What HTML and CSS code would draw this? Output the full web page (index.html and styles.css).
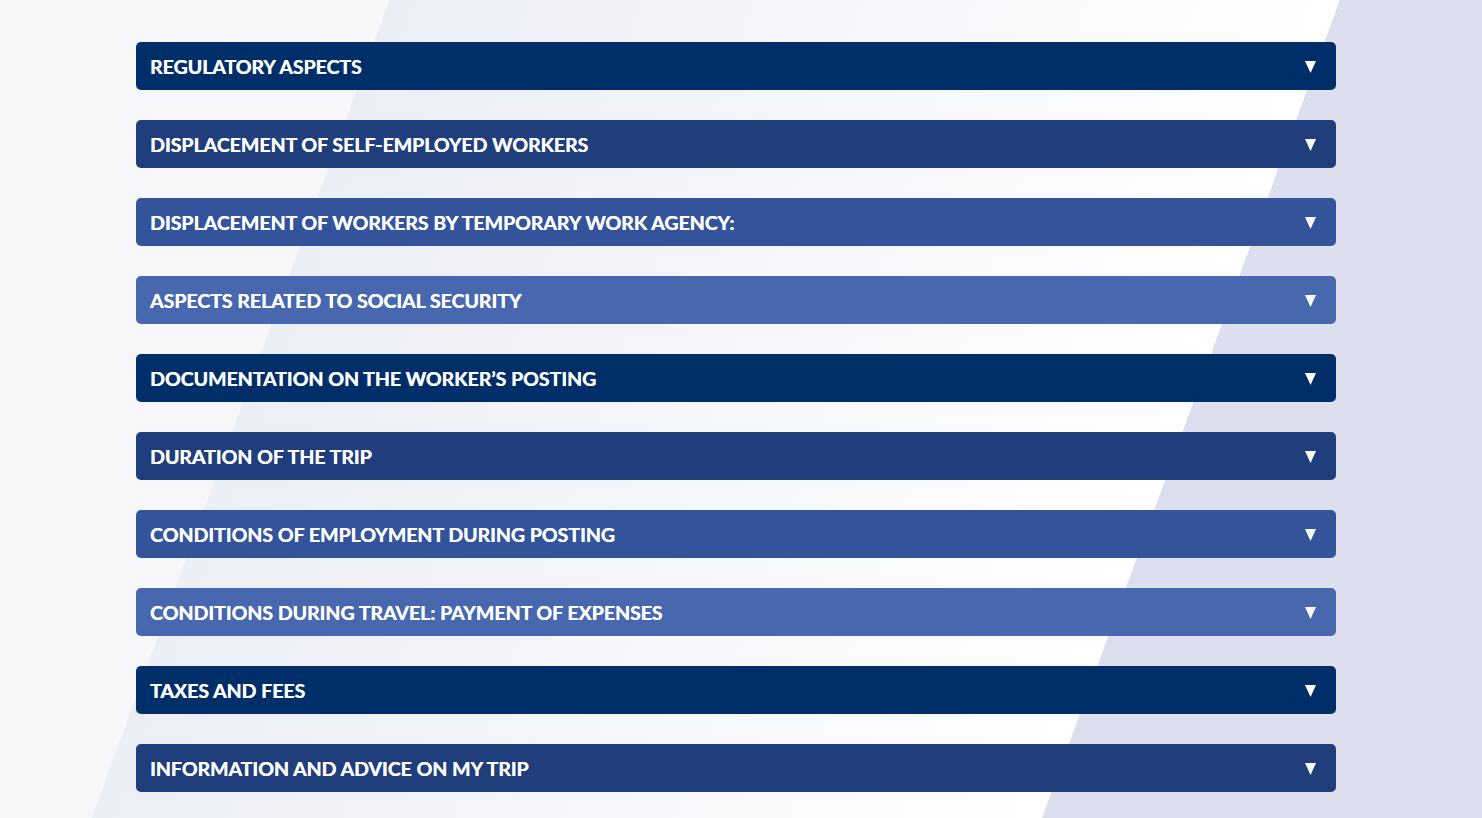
FILE: index.html
```html
<!DOCTYPE html>
<html lang="en">
<head>
  <meta charset="UTF-8" />
  <meta name="viewport" content="width=device-width, initial-scale=1.0" />
  <title>Posting of Workers</title>
  <link rel="stylesheet" href="styles.css">
</head>
<body>

  <div class="page">
    <div class="accordion">
      <details class="item tone-1">
        <summary>Regulatory aspects <svg class="arrow" viewBox="0 0 11 12"><path d="M0 0H11L5.5 12Z"/></svg></summary>
      </details>
      <details class="item tone-2">
        <summary>Displacement of self-employed workers <svg class="arrow" viewBox="0 0 11 12"><path d="M0 0H11L5.5 12Z"/></svg></summary>
      </details>
      <details class="item tone-3">
        <summary>Displacement of workers by temporary work agency: <svg class="arrow" viewBox="0 0 11 12"><path d="M0 0H11L5.5 12Z"/></svg></summary>
      </details>
      <details class="item tone-4">
        <summary>Aspects related to social security <svg class="arrow" viewBox="0 0 11 12"><path d="M0 0H11L5.5 12Z"/></svg></summary>
      </details>
      <details class="item tone-1">
        <summary>Documentation on the worker’s posting <svg class="arrow" viewBox="0 0 11 12"><path d="M0 0H11L5.5 12Z"/></svg></summary>
      </details>
      <details class="item tone-2">
        <summary>Duration of the trip <svg class="arrow" viewBox="0 0 11 12"><path d="M0 0H11L5.5 12Z"/></svg></summary>
      </details>
      <details class="item tone-3">
        <summary>Conditions of employment during posting <svg class="arrow" viewBox="0 0 11 12"><path d="M0 0H11L5.5 12Z"/></svg></summary>
      </details>
      <details class="item tone-4">
        <summary>Conditions during travel: payment of expenses <svg class="arrow" viewBox="0 0 11 12"><path d="M0 0H11L5.5 12Z"/></svg></summary>
      </details>
      <details class="item tone-1">
        <summary>Taxes and fees <svg class="arrow" viewBox="0 0 11 12"><path d="M0 0H11L5.5 12Z"/></svg></summary>
      </details>
      <details class="item tone-2">
        <summary>Information and advice on my trip <svg class="arrow" viewBox="0 0 11 12"><path d="M0 0H11L5.5 12Z"/></svg></summary>
      </details>
    </div>
  </div>

</body>
</html>
```

FILE: styles.css
```css
* {
  box-sizing: border-box;
}

body {
  margin: 0;
  font-family: Lato, "Open Sans", Arial, sans-serif;
}

.page {
  min-height: 100vh;
  padding: 42px 0 26px;
  background: linear-gradient(110deg,
    #f7f7fa 0, #f7f7fa 366px,
    #eceef6 366px, #ffffff 1259px,
    #dddfee 1259px, #dddfee 100%);
}

.accordion {
  width: 1200px;
  margin: 0 0 0 136px;
  display: flex;
  flex-direction: column;
  gap: 30px;
}

.item summary {
  list-style: none;
  display: flex;
  align-items: center;
  justify-content: space-between;
  height: 48px;
  padding: 0 20px 0 14px;
  border-radius: 5px;
  color: #fff;
  font-size: 19.5px;
  font-weight: 700;
  text-shadow: 0.3px 0 0 #fff;
  text-transform: uppercase;
  cursor: pointer;
}

.item summary::-webkit-details-marker {
  display: none;
}

.arrow {
  width: 11px;
  height: 12px;
  margin-top: 2px;
  fill: #fff;
}

.tone-1 summary { background: #002e69; }
.tone-2 summary { background: #1f3e7b; }
.tone-3 summary { background: #33549a; }
.tone-4 summary { background: #4767ae; }
```
